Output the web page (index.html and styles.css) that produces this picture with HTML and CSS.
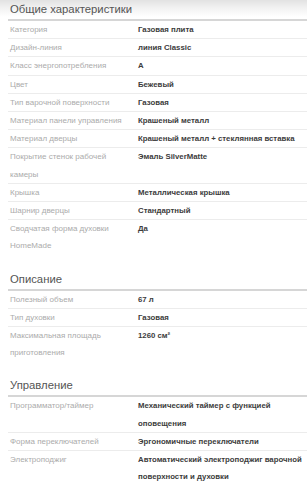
FILE: index.html
```html
<!DOCTYPE html>
<html lang="ru">
<head>
<meta charset="utf-8">
<title>Характеристики</title>
<link rel="stylesheet" href="styles.css">
</head>
<body>
<div class="page">
  <section class="section">
    <h2 class="title">Общие характеристики</h2>
    <div class="row"><div class="label">Категория</div><div class="value">Газовая плита</div></div>
    <div class="row"><div class="label">Дизайн-линия</div><div class="value">линия Classic</div></div>
    <div class="row"><div class="label">Класс энергопотребления</div><div class="value">A</div></div>
    <div class="row"><div class="label">Цвет</div><div class="value">Бежевый</div></div>
    <div class="row"><div class="label">Тип варочной поверхности</div><div class="value">Газовая</div></div>
    <div class="row"><div class="label">Материал панели управления</div><div class="value">Крашеный металл</div></div>
    <div class="row"><div class="label">Материал дверцы</div><div class="value">Крашеный металл + стеклянная вставка</div></div>
    <div class="row"><div class="label">Покрытие стенок рабочей камеры</div><div class="value">Эмаль SilverMatte</div></div>
    <div class="row"><div class="label">Крышка</div><div class="value">Металлическая крышка</div></div>
    <div class="row"><div class="label">Шарнир дверцы</div><div class="value">Стандартный</div></div>
    <div class="row"><div class="label">Сводчатая форма духовки HomeMade</div><div class="value">Да</div></div>
  </section>
  <section class="section">
    <h2 class="title">Описание</h2>
    <div class="row"><div class="label">Полезный объем</div><div class="value">67 л</div></div>
    <div class="row"><div class="label">Тип духовки</div><div class="value">Газовая</div></div>
    <div class="row"><div class="label">Максимальная площадь приготовления</div><div class="value">1260 см²</div></div>
  </section>
  <section class="section">
    <h2 class="title">Управление</h2>
    <div class="row"><div class="label">Программатор/таймер</div><div class="value">Механический таймер с функцией оповещения</div></div>
    <div class="row"><div class="label">Форма переключателей</div><div class="value">Эргономичные переключатели</div></div>
    <div class="row"><div class="label">Электроподжиг</div><div class="value">Автоматический электроподжиг варочной поверхности и духовки</div></div>
  </section>
</div>
</body>
</html>
```
FILE: styles.css
```css
html, body {
  margin: 0;
  padding: 0;
}
body {
  background: #fff linear-gradient(#e2e2e2 0, #f2f2f2 8px, #ffffff 17px) no-repeat;
  font-family: "Liberation Sans", Arial, sans-serif;
  color: #333;
}
.page {
  padding-left: 8px;
}
.section + .section {
  margin-top: 15px;
}
.title {
  margin: 0;
  padding-left: 2px;
  font-size: 11.3px;
  font-weight: normal;
  line-height: 19px;
  color: #555;
  border-bottom: 2px solid #d6d6d6;
}
.row {
  display: flex;
  font-size: 8px;
  line-height: 17.2px;
  border-bottom: 1px solid #ececec;
}
.row:last-child {
  border-bottom: none;
}
.label {
  flex: 0 0 118px;
  padding: 0 10px 0 2px;
  color: #ababab;
}
.value {
  flex: 1 1 auto;
  padding-right: 2px;
  font-size: 7.8px;
  font-weight: bold;
  color: #3c3c3c;
}
```
